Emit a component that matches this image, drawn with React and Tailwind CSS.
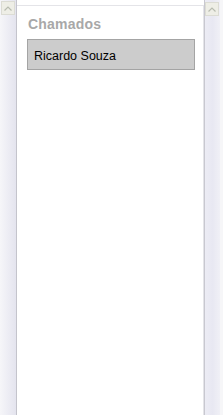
import React from 'react';

function UpButton() {
  return (
    <div className="w-[14px] h-[14px] border border-[#dcdcd4] bg-[#eeeee6] flex items-center justify-center">
      <svg width="8" height="5" viewBox="0 0 8 5">
        <path d="M0.5 4.5 L4 1 L7.5 4.5" fill="none" stroke="#b8bcb0" strokeWidth="1.2" />
      </svg>
    </div>
  );
}

function ScrollTrack({ side }) {
  return (
    <div
      className={
        side === 'left'
          ? 'w-[16px] h-full flex flex-col pt-[1px] pl-[1px] bg-gradient-to-r from-[#f6f6f9] via-[#ededf4] to-[#e4e4ee]'
          : 'w-[15px] h-full flex flex-col pt-[2px] bg-gradient-to-r from-[#ececf4] via-[#e8e8f2] to-[#f0f0f6]'
      }
    >
      <UpButton />
    </div>
  );
}

export default function App() {
  return (
    <div className="w-[223px] h-[415px] flex bg-white overflow-hidden" style={{ fontFamily: '"Liberation Sans", Arial, sans-serif' }}>
      <ScrollTrack side="left" />
      <div className="flex-1 h-full border-l border-[#c4c4cc] pt-[5px]">
        <div className="h-full border-t border-r border-[#e4e4e8] pl-[10px] pr-[8px] pt-[10px]">
          <h2 className="text-[14px] font-bold text-[#a8a8a8] leading-[17px] mb-[6px] ml-[1px] tracking-[0.2px]">Chamados</h2>
          <div className="h-[31px] bg-[#cccccc] border border-[#a4a4a4] flex items-center pl-[6px] pt-[3px] text-[12.5px] text-black">
            Ricardo Souza
          </div>
        </div>
      </div>
      <div className="w-[1px] h-full bg-[#c8c8d0]" />
      <ScrollTrack side="right" />
      <div className="w-[3px] h-full bg-[#f6f6f8]" />
    </div>
  );
}
